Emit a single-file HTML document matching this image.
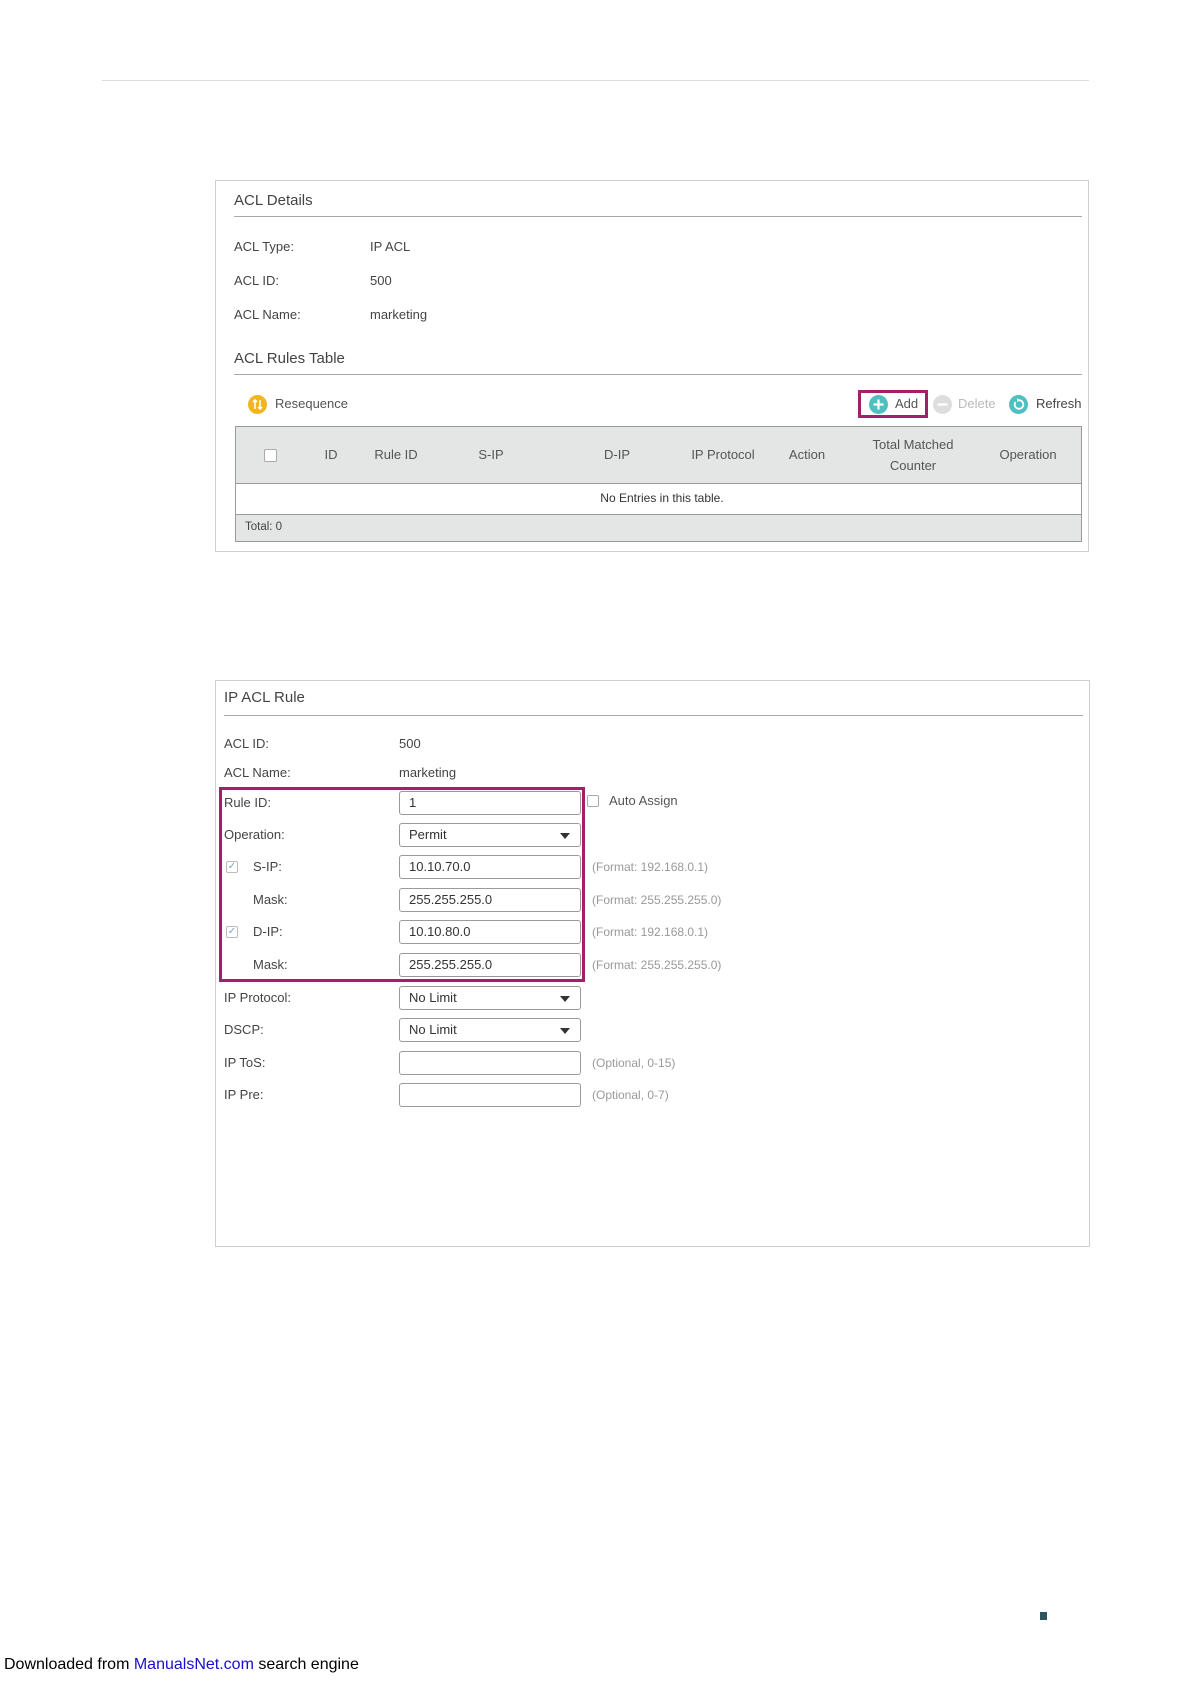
<!DOCTYPE html>
<html><head><meta charset="utf-8"><style>
*{margin:0;padding:0;box-sizing:border-box}
body{width:1191px;height:1684px;background:#fff;position:relative;font-family:"Liberation Sans",sans-serif;color:#444;overflow:hidden}
.a{position:absolute;white-space:nowrap}
.t{font-size:13px;line-height:16px;transform:translateY(-8px)}
.panel{position:absolute;border:1px solid #cfcfcf}
.hl{position:absolute;height:1px;background:#a8a8a8}
.inp{position:absolute;left:399px;width:182px;height:24px;border:1px solid #9a9a9a;border-radius:3px;background:#fff;font-size:13px;line-height:22px;padding-left:9px;color:#333}
.arr{position:absolute;right:10px;top:9px;width:0;height:0;border-left:5px solid transparent;border-right:5px solid transparent;border-top:6px solid #333}
.hint{left:592px;color:#999}
.cb{position:absolute;width:12px;height:12px;border:1px solid #aaa;border-radius:2px;background:#fff}
.th{position:absolute;font-size:13px;color:#555;text-align:center;transform:translate(-50%,-50%);line-height:18px}
</style></head><body>
<div class="hl" style="left:102px;top:80px;width:987px;background:#ddd"></div>

<div class="panel" style="left:215px;top:180px;width:874px;height:372px"></div>
<div class="a" style="left:234px;top:201px;font-size:15px;transform:translateY(-9px);color:#444">ACL Details</div>
<div class="hl" style="left:234px;top:216px;width:848px"></div>
<div class="a t" style="left:234px;top:247px">ACL Type:</div><div class="a t" style="left:370px;top:247px">IP ACL</div>
<div class="a t" style="left:234px;top:281px">ACL ID:</div><div class="a t" style="left:370px;top:281px">500</div>
<div class="a t" style="left:234px;top:315px">ACL Name:</div><div class="a t" style="left:370px;top:315px">marketing</div>
<div class="a" style="left:234px;top:359px;font-size:15px;transform:translateY(-9px)">ACL Rules Table</div>
<div class="hl" style="left:234px;top:374px;width:848px"></div>

<svg class="a" style="left:248px;top:395px" width="19" height="19"><circle cx="9.5" cy="9.5" r="9.5" fill="#f2b51c"/><path d="M7 5v9M5 7l2-2 2 2M12 14V5M10 12l2 2 2-2" stroke="#fff" stroke-width="1.6" fill="none"/></svg>
<div class="a t" style="left:275px;top:404px;color:#555">Resequence</div>
<div class="a" style="left:858px;top:390px;width:70px;height:28px;border:3px solid #a41f6a"></div>
<svg class="a" style="left:869px;top:395px" width="19" height="19"><circle cx="9.5" cy="9.5" r="9.5" fill="#4fc0c0"/><path d="M9.5 4.5v10M4.5 9.5h10" stroke="#fff" stroke-width="2.2"/></svg>
<div class="a t" style="left:895px;top:404px;color:#555">Add</div>
<svg class="a" style="left:933px;top:395px" width="19" height="19"><circle cx="9.5" cy="9.5" r="9.5" fill="#ddd"/><path d="M4.5 9.5h10" stroke="#fff" stroke-width="2.2"/></svg>
<div class="a t" style="left:958px;top:404px;color:#bbb">Delete</div>
<svg class="a" style="left:1009px;top:395px" width="19" height="19"><circle cx="9.5" cy="9.5" r="9.5" fill="#4fc0c0"/><path d="M6.5 7a4.3 4.3 0 1 0 3-1.8" stroke="#fff" stroke-width="1.8" fill="none"/><path d="M8 3l2.5 2.2-2.5 2.2z" fill="#fff"/></svg>
<div class="a t" style="left:1036px;top:404px;color:#444">Refresh</div>

<div class="a" style="left:235px;top:426px;width:847px;height:116px;border:1px solid #9a9a9a;background:#e3e6e5"></div>
<div class="a" style="left:236px;top:483px;width:845px;height:32px;background:#fff;border-top:1px solid #9a9a9a;border-bottom:1px solid #9a9a9a"></div>
<div class="cb" style="left:264px;top:449px;width:13px;height:13px"></div>
<div class="th" style="left:331px;top:455px">ID</div>
<div class="th" style="left:396px;top:455px">Rule ID</div>
<div class="th" style="left:491px;top:455px">S-IP</div>
<div class="th" style="left:617px;top:455px">D-IP</div>
<div class="th" style="left:723px;top:455px">IP Protocol</div>
<div class="th" style="left:807px;top:455px">Action</div>
<div class="th" style="left:913px;top:455px;line-height:21px">Total Matched<br>Counter</div>
<div class="th" style="left:1028px;top:455px">Operation</div>
<div class="th" style="left:662px;top:498px;font-size:12px;color:#333">No Entries in this table.</div>
<div class="a" style="left:245px;top:521px;font-size:11.5px;color:#444">Total: 0</div>

<div class="panel" style="left:215px;top:680px;width:875px;height:567px"></div>
<div class="a" style="left:224px;top:698px;font-size:15px;transform:translateY(-9px)">IP ACL Rule</div>
<div class="hl" style="left:224px;top:715px;width:859px"></div>
<div class="a t" style="left:224px;top:744px">ACL ID:</div><div class="a t" style="left:399px;top:744px">500</div>
<div class="a t" style="left:224px;top:773px">ACL Name:</div><div class="a t" style="left:399px;top:773px">marketing</div>

<div class="a t" style="left:224px;top:803px">Rule ID:</div>
<div class="inp" style="top:791px">1</div>
<div class="cb" style="left:587px;top:795px"></div><div class="a t" style="left:609px;top:801px;color:#555">Auto Assign</div>
<div class="a t" style="left:224px;top:835px">Operation:</div>
<div class="inp" style="top:823px">Permit<div class="arr"></div></div>
<div class="cb" style="left:226px;top:861px;font-size:10px;line-height:10px;color:#7ab;text-align:center;border-color:#bbb">✓</div>
<div class="a t" style="left:253px;top:867px">S-IP:</div>
<div class="inp" style="top:855px">10.10.70.0</div><div class="a t hint" style="top:867px;font-size:12px">(Format: 192.168.0.1)</div>
<div class="a t" style="left:253px;top:900px">Mask:</div>
<div class="inp" style="top:888px">255.255.255.0</div><div class="a t hint" style="top:900px;font-size:12px">(Format: 255.255.255.0)</div>
<div class="cb" style="left:226px;top:926px;font-size:10px;line-height:10px;color:#7ab;text-align:center;border-color:#bbb">✓</div>
<div class="a t" style="left:253px;top:932px">D-IP:</div>
<div class="inp" style="top:920px">10.10.80.0</div><div class="a t hint" style="top:932px;font-size:12px">(Format: 192.168.0.1)</div>
<div class="a t" style="left:253px;top:965px">Mask:</div>
<div class="inp" style="top:953px">255.255.255.0</div><div class="a t hint" style="top:965px;font-size:12px">(Format: 255.255.255.0)</div>
<div class="a" style="left:219px;top:787px;width:366px;height:195px;border:3px solid #a41f6a"></div>

<div class="a t" style="left:224px;top:998px">IP Protocol:</div>
<div class="inp" style="top:986px">No Limit<div class="arr"></div></div>
<div class="a t" style="left:224px;top:1030px">DSCP:</div>
<div class="inp" style="top:1018px">No Limit<div class="arr"></div></div>
<div class="a t" style="left:224px;top:1063px">IP ToS:</div>
<div class="inp" style="top:1051px"></div><div class="a t hint" style="top:1063px;font-size:12px">(Optional, 0-15)</div>
<div class="a t" style="left:224px;top:1095px">IP Pre:</div>
<div class="inp" style="top:1083px"></div><div class="a t hint" style="top:1095px;font-size:12px">(Optional, 0-7)</div>

<div class="a" style="left:1040px;top:1612px;width:7px;height:8px;background:#2e5560"></div>
<div class="a" style="left:4px;top:1656px;font-size:16px;color:#000">Downloaded from <span style="color:#1a0dcc">ManualsNet.com</span> search engine</div>
</body></html>
